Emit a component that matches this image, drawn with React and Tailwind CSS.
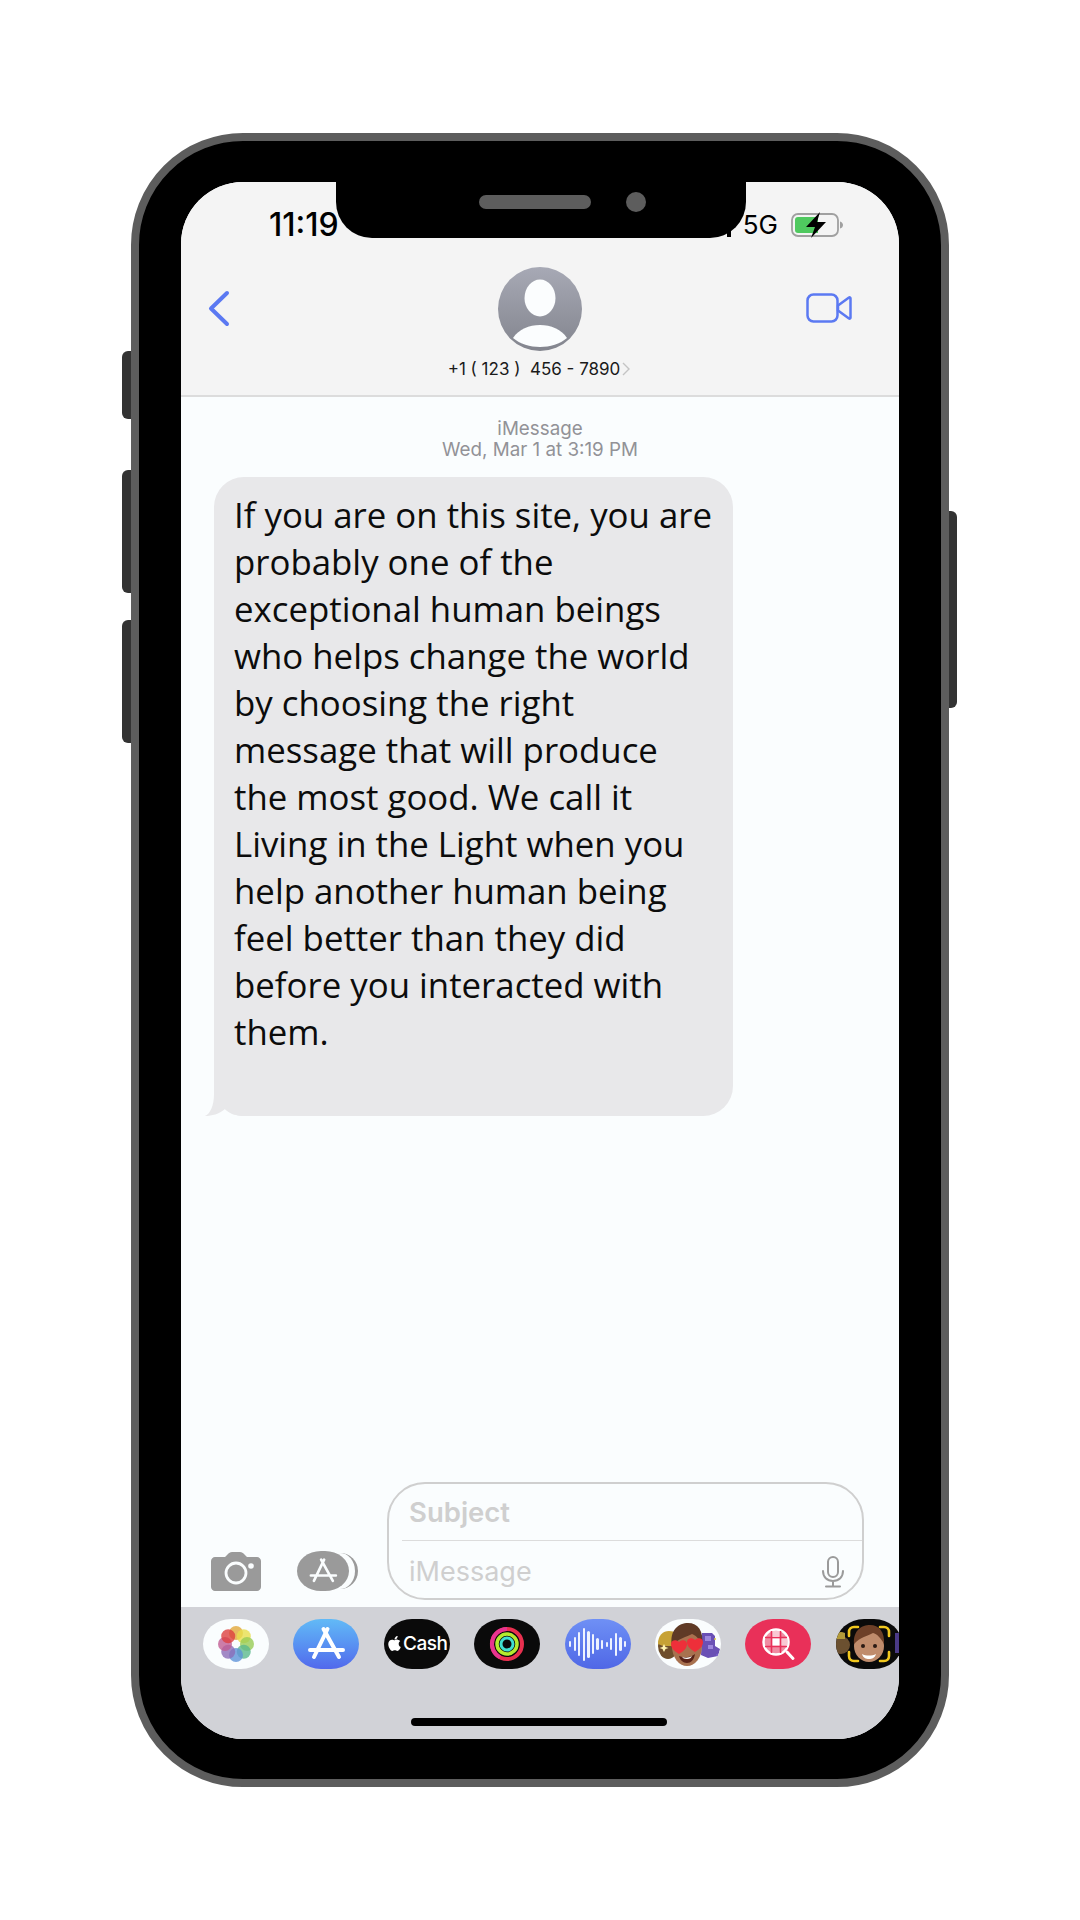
import React from "react";
import { FaApple } from "react-icons/fa";

const AppStoreGlyph = ({ className, width = 4 }) => (
  <svg viewBox="0 0 66 50" className={className} fill="none" stroke="currentColor" strokeWidth={width} strokeLinecap="round">
    <path d="M30.5 10 46 38M34.5 10 21 38M17 31h33" />
  </svg>
);

const PhotosIcon = () => (
  <svg viewBox="0 0 66 50" className="w-[66px] h-[50px]">
    {[
      ["#e2a83a", 0],
      ["#e8df4c", 45],
      ["#98cc55", 90],
      ["#5cb98c", 135],
      ["#5f93d8", 180],
      ["#8c6db8", 225],
      ["#c05d94", 270],
      ["#dd4040", 315],
    ].map(([color, angle]) => (
      <circle key={angle} cx="33" cy="14" r="7" fill={color} fillOpacity="0.8" transform={`rotate(${angle} 33 25)`} />
    ))}
  </svg>
);

const ActivityRings = () => (
  <svg viewBox="0 0 66 50" className="w-[66px] h-[50px]" fill="none">
    <circle cx="33" cy="25" r="15" stroke="#e8304f" strokeWidth="4" />
    <path d="M33 10A15 15 0 0 0 26 38.300" stroke="#e8348f" strokeWidth="4" />
    <circle cx="33" cy="25" r="10" stroke="#b4ec2f" strokeWidth="3.500" />
    <circle cx="33" cy="25" r="6" stroke="#3fe0d0" strokeWidth="3" />
  </svg>
);

const Waveform = () => {
  const bars = [6, 14, 24, 33, 27, 20, 12, 9, 5, 12, 23, 14, 6];
  return (
    <div className="flex items-center gap-[2.4px]">
      {bars.map((h, i) => (
        <span key={i} className="w-[2.2px] rounded-full bg-[#eef3ff]" style={{ height: h }} />
      ))}
    </div>
  );
};

const SearchGlyph = () => (
  <svg viewBox="0 0 66 50" className="w-[66px] h-[50px]" fill="none">
    <path d="M42 33 48 39.500" stroke="#fff" strokeWidth="3" strokeLinecap="round" />
    <circle cx="31" cy="23" r="12.500" fill="#f08ca3" stroke="#fff" strokeWidth="2.500" />
    <path d="M20 18.500h22M20 27.500h22M26.500 12v22M35.500 12v22" stroke="#e93059" strokeWidth="1.600" />
    <rect x="27.500" y="19.500" width="7" height="7" fill="#fff" />
    <path d="M27.500 12h7v6h-7ZM36.500 19.500h6v7h-6Z" fill="#f9c8d3" />
  </svg>
);

const MemojiHearts = () => (
  <svg viewBox="0 0 66 50" className="w-[66px] h-[50px]">
    <path d="M47 14h10l3 3v10l5 3-2 7-10 2-7-3Z" fill="#6a50b5" />
    <path d="M50 17h6v5h-6ZM53 26h5v4h-5Z" fill="#9d86dd" />
    <circle cx="60" cy="20" r="1" fill="#d8c640" />
    <circle cx="62" cy="36" r="1" fill="#7a5fd0" />
    <ellipse cx="13" cy="27" rx="10" ry="13" fill="#6e4e2c" />
    <path d="M3 25C3 16 8 12 14 12s9 3 9 11l-4 4H8Z" fill="#c7a235" />
    <path d="m9 25 1.500 3 3 1-3 1-1.500 3-1.500-3-3-1 3-1Z" fill="#fff3b0" />
    <ellipse cx="32" cy="27" rx="15" ry="20" fill="#a8714f" />
    <path d="M17 27C14 11 24 4 33 4c10 0 16 8 14 22-3-7-7-10-10-11-5 3-14 4-20 12Z" fill="#5f3a26" />
    <path d="M24 37c5 2 11 2 16-2-1 6-4 9-8 9s-7-3-8-7Z" fill="#5a2318" />
    <path d="M27 38c3 1 7 1 10-1-1 2-2 3-5 3s-4-1-5-2Z" fill="#fff" />
    <path d="M24 35c-5-3-8-6-8-10 0-4 5-5 8-2 3-3 8-2 8 2 0 4-3 7-8 10Z" fill="#ee2f3a" />
    <path d="M40 33c-5-3-8-6-8-10 0-4 5-5 8-2 3-3 8-2 8 2 0 4-3 7-8 10Z" fill="#ee2f3a" />
  </svg>
);

const MemojiFrame = () => (
  <svg viewBox="0 0 66 50" className="w-[66px] h-[50px]" fill="none">
    <circle cx="5" cy="26" r="9" fill="#6b5030" />
    <path d="M-2 20C0 13 4 12 9 14v6Z" fill="#b39a3a" />
    <rect x="59" y="14" width="7" height="20" fill="#4a3a86" />
    <ellipse cx="33" cy="27" rx="15" ry="16" fill="#c08c6c" />
    <path d="M18 25C17 11 26 6 34 6c9 0 15 7 14 19-3-6-7-10-11-11-5 3-13 4-19 11Z" fill="#6e4028" />
    <circle cx="27" cy="27" r="2" fill="#2a1a14" />
    <circle cx="39" cy="27" r="2" fill="#2a1a14" />
    <path d="M26 35c4 2 10 2 14 0-1 4-4 5-7 5s-6-1-7-5Z" fill="#fff" />
    <path
      d="M13 17v-4c0-3 2-5 5-5h4M44 8h4c3 0 5 2 5 5v4M13 33v4c0 3 2 5 5 5h4M44 42h4c3 0 5-2 5-5v-4"
      stroke="#f2c81e"
      strokeWidth="2.600"
      strokeLinecap="round"
    />
  </svg>
);

const Pill = ({ className = "", children }) => (
  <div className={`w-[66px] h-[50px] shrink-0 rounded-[28px/25px] overflow-hidden flex items-center justify-center ${className}`}>
    {children}
  </div>
);

const SideButton = ({ className }) => <div className={`absolute bg-[#333333] ${className}`} />;

export default function App() {
  return (
    <div className="w-[1080px] h-[1920px] bg-white pt-[133px] overflow-hidden font-['Inter',sans-serif]">
      <div className="relative w-[818px] h-[1654px] ml-[131px] flex border-8 border-[#5d5d5d] rounded-[112px] bg-black px-[42px] pt-[41px] pb-[40px]">
        <SideButton className="-left-[17px] top-[210px] w-[9px] h-[68px] rounded-l-[6px]" />
        <SideButton className="-left-[17px] top-[329px] w-[9px] h-[123px] rounded-l-[6px]" />
        <SideButton className="-left-[17px] top-[479px] w-[9px] h-[123px] rounded-l-[6px]" />
        <SideButton className="-right-[16px] top-[370px] w-[8px] h-[197px] rounded-r-[6px]" />

        <div className="relative flex-1 flex flex-col rounded-[62px] overflow-hidden bg-[#fafdfe]">
          <header className="h-[215px] shrink-0 bg-[#f4f4f4] border-b-2 border-[#dcdcdc] flex flex-col">
            <div className="h-[85px] flex items-start justify-between pl-[88px] pr-[54px] pt-[25px] text-black">
              <span className="text-[32px] leading-[36px] font-medium">11:19</span>
              <div className="flex items-center gap-[13px] h-[36px]">
                <div className="flex items-end h-[24px] -mr-[1px]">
                  <span className="w-[4px] h-[10px] bg-black" />
                </div>
                <span className="text-[26px] leading-[36px]">5G</span>
                <svg viewBox="0 0 54 26" className="w-[54px] h-[26px]">
                  <rect x="1" y="2" width="46" height="22" rx="6" fill="none" stroke="#a0a0a0" strokeWidth="1.800" />
                  <path d="M7 5h20v16H7c-2 0-3-1-3-3V8c0-2 1-3 3-3Z" fill="#4fc95f" />
                  <path d="M49 9.500c2 .6 3 2 3 3.500s-1 3-3 3.500Z" fill="#a0a0a0" />
                  <path d="M29 0 15 15h9l-4 11 15-16h-9Z" fill="#000" />
                </svg>
              </div>
            </div>
            <div className="grid grid-cols-[1fr_auto_1fr]">
              <svg viewBox="0 0 22 37" className="w-[22px] h-[37px] ml-[27px] mt-[23px]" fill="none" stroke="#5b79f2" strokeWidth="4" strokeLinecap="round" strokeLinejoin="round">
                <path d="M19 3 3 18.500 19 34" />
              </svg>
              <div className="flex flex-col items-center">
                <div className="w-[84px] h-[84px] rounded-full overflow-hidden bg-gradient-to-b from-[#a7a9b5] to-[#83858e]">
                  <svg viewBox="0 0 84 84" className="w-[84px] h-[84px]" fill="#fbfdfe">
                    <ellipse cx="42" cy="31" rx="15.500" ry="18.500" />
                    <path d="M15 71c6-9 16-13 27-13s21 4 27 13c-7 6-17 9-27 9s-20-3-27-9Z" />
                  </svg>
                </div>
                <div className="mt-[7px] -ml-[2px] flex items-center text-[17px] leading-[22px] text-[#1a1a1a] whitespace-pre">
                  <span>+1 ( 123 )  456 - 7890</span>
                  <svg viewBox="0 0 8 14" className="w-[8px] h-[14px] ml-[2px]" fill="none" stroke="#c4c4c4" strokeWidth="1.400">
                    <path d="m1 1 6 6-6 6" />
                  </svg>
                </div>
              </div>
              <svg viewBox="0 0 46 30" className="w-[46px] h-[30px] mt-[26px] mr-[47px] justify-self-end" fill="none" stroke="#5b79f2" strokeWidth="2.500" strokeLinejoin="round">
                <rect x="1.500" y="1.500" width="30" height="27" rx="6" />
                <path d="M32 12.500 43 4.500c.8-.5 1.500 0 1.500 1v19c0 1-.7 1.500-1.500 1l-11-8Z" />
              </svg>
            </div>
          </header>

          {/* notch sits over the status bar */}
          <div className="absolute left-[155px] top-0 w-[410px] h-[56px] rounded-b-[36px] bg-black flex items-start pl-[143px] pt-[10px]">
            <div className="w-[112px] h-[14px] mt-[3px] rounded-full bg-[#5d5d5d]" />
            <div className="w-[20px] h-[20px] ml-[35px] rounded-full bg-[#5d5d5d]" />
          </div>

          <main className="flex-1 flex flex-col pt-[21px] pb-[7px]">
            <div className="text-center text-[18.800px] leading-[21px] text-[#929297]">
              <div>iMessage</div>
              <div>Wed, Mar 1 at 3:19 PM</div>
            </div>

            <div className="relative mt-[17px] ml-[33px] w-[519px] h-[639px] rounded-[30px] bg-[#e8e8ea] pl-[20px] pr-[18px] pt-[14px] font-['Open_Sans',sans-serif] text-[34.800px] leading-[47px] text-[#0c0c0c]">
              If you are on this site, you are probably one of the exceptional human beings who helps change the world by choosing the right message that will produce the most good. We call it Living in the Light when you help another human being feel better than they did before you interacted with them.
              <svg viewBox="0 0 40 30" className="absolute -left-[10px] bottom-0 w-[40px] h-[30px]" fill="#e8e8ea">
                <path d="M10 0v8c0 12-4 20-9 22 7 0 14-2 20-7 5 5 11 7 19 7V0Z" />
              </svg>
            </div>

            <div className="mt-auto flex items-end pl-[30px] pr-[35px]">
              <svg viewBox="0 0 50 39" className="w-[50px] h-[39px] mb-[9px] shrink-0" fill="#9a9a9a">
                <path d="M4 5h10l3-3c1-1 2-2 4-2h8c2 0 3 1 4 2l3 3h10c2 0 4 2 4 4v26c0 2-2 4-4 4H4c-2 0-4-2-4-4V9c0-2 2-4 4-4Z" />
                <circle cx="25" cy="21" r="10" fill="none" stroke="#fafdfe" strokeWidth="2.800" />
                <circle cx="40" cy="14" r="2.800" fill="#fafdfe" />
              </svg>
              <div className="relative w-[61px] h-[40px] ml-[36px] mb-[9px] shrink-0 text-[#fafdfe]">
                <div className="absolute right-0 top-[2px] w-[30px] h-[36px] rounded-r-[18px] border-r-[3px] border-[#9a9a9a]" />
                <div className="absolute left-0 top-0 w-[52px] h-[40px] rounded-[24px/20px] bg-[#9a9a9a] flex items-center justify-center">
                  <AppStoreGlyph className="w-[50px] h-[38px]" width="3.500" />
                </div>
              </div>
              <div className="ml-[29px] flex-1 h-[118px] rounded-[38px] border-2 border-[#cfcfcf]">
                <div className="ml-[13px] h-[57px] border-b border-[#dcdcdc] pl-[7px] pt-[9px] text-[27.500px] leading-[38px] font-semibold text-[#cfcfcf]">
                  Subject
                </div>
                <div className="flex items-center justify-between pl-[20px] pr-[18px] h-[59px] pt-[2px]">
                  <span className="text-[27px] leading-[38px] text-[#cfcfcf]">iMessage</span>
                  <svg viewBox="0 0 22 32" className="w-[22px] h-[32px]" fill="none" stroke="#9a9a9a" strokeWidth="2" strokeLinecap="round">
                    <rect x="6" y="1" width="10" height="20" rx="5" />
                    <path d="M1 15c0 6 4 10 10 10s10-4 10-10M11 25v5M4 30.500h14" />
                  </svg>
                </div>
              </div>
            </div>
          </main>

          <footer className="h-[132px] shrink-0 bg-[#d1d2d7] pt-[12px] overflow-hidden">
            <div className="flex gap-[24.400px] pl-[22px]">
              <Pill className="bg-[#fafdfe]">
                <PhotosIcon />
              </Pill>
              <Pill className="bg-gradient-to-b from-[#62baf6] to-[#5268ec] text-white">
                <AppStoreGlyph className="w-[66px] h-[50px]" />
              </Pill>
              <Pill className="bg-[#0a0a0a] text-white">
                <FaApple className="text-[17px] -mt-[2px]" />
                <span className="text-[19px] leading-[24px] font-medium tracking-[-0.5px]">Cash</span>
              </Pill>
              <Pill className="bg-[#0a0a0a]">
                <ActivityRings />
              </Pill>
              <Pill className="bg-gradient-to-b from-[#6f90f5] to-[#5067e6]">
                <Waveform />
              </Pill>
              <Pill className="bg-[#fafdfe]">
                <MemojiHearts />
              </Pill>
              <Pill className="bg-[#e93059]">
                <SearchGlyph />
              </Pill>
              <Pill className="bg-[#0a0a0a]">
                <MemojiFrame />
              </Pill>
            </div>
            <div className="w-[256px] h-[8px] mt-[49px] ml-[230px] rounded-full bg-black" />
          </footer>
        </div>
      </div>
    </div>
  );
}
